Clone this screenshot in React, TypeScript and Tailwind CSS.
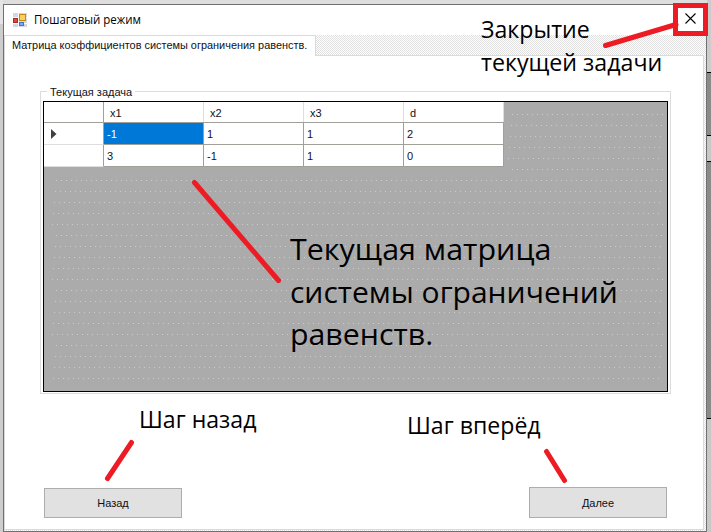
import React from 'react';

const ui = "font-['Liberation_Sans',sans-serif] text-[11px] leading-[13px] text-[#101018] whitespace-nowrap";
const note = "absolute origin-top-left whitespace-nowrap text-black font-['Open_Sans','Noto_Sans',sans-serif]";

const headers = ['x1', 'x2', 'x3', 'd'];
const rows = [
  ['-1', '1', '1', '2'],
  ['3', '-1', '1', '0'],
];

function AppIcon() {
  return (
    <svg width="14" height="14" viewBox="0 0 14 14" className="block shrink-0" shapeRendering="crispEdges">
      <rect width="14" height="14" fill="#d4d7df" />
      <path d="M5.5 0v14M0 4.5h14M0 10.5h14" stroke="#f7f8fa" />
      <rect x="0" y="5" width="5" height="5" fill="#a92b25" />
      <rect x="1" y="6" width="3" height="3" fill="#d8493c" />
      <rect x="6" y="1" width="7" height="7" fill="#c98a12" />
      <rect x="7" y="2" width="5" height="5" fill="#fbd055" />
      <rect x="6" y="9" width="5" height="4" fill="#3f78d0" />
      <rect x="7" y="10" width="3" height="2" fill="#78aaf0" />
    </svg>
  );
}

function Grid() {
  return (
    <div className="relative h-[291px] w-[625px] border border-black bg-[#ababab]">
      <svg className="absolute inset-0" width="623" height="289" shapeRendering="crispEdges">
        <defs>
          <pattern id="dots" width="5" height="55" patternUnits="userSpaceOnUse">
            {[0, 1, 2, 3, 4].map((i) => (
              <rect key={i} x={4 - i} y={1 + i * 11} width="1" height="1" fill="#cccccc" />
            ))}
          </pattern>
        </defs>
        <rect x="464" y="6" width="155" height="62" fill="url(#dots)" />
        <rect x="8" y="68" width="611" height="218" fill="url(#dots)" />
      </svg>
      <div className={`relative w-[460px] bg-white ${ui}`}>
        <div className="flex h-[21px] border-b border-[#a0a098]">
          <div className="w-[60px] border-r border-[#a0a0a0]" />
          {headers.map((h) => (
            <div key={h} className="w-[100px] border-r border-[#dedede] pl-[6px] pt-[5px]">{h}</div>
          ))}
        </div>
        {rows.map((r, i) => (
          <div key={i} className="flex h-[22px]">
            <div className="flex w-[60px] items-center border-r border-b border-r-[#a0a0a0] border-b-[#dedede] pl-[7px]">
              {i === 0 && <svg width="6" height="10"><path d="M0 0L5.5 5L0 10Z" fill="#404040" /></svg>}
            </div>
            {r.map((v, j) => (
              <div
                key={j}
                className={`w-[100px] border-r border-b border-[#a0a098] pl-[3px] pt-[5px] ${i === 0 && j === 0 ? 'bg-[#0078d7] text-white' : ''}`}
              >
                {v}
              </div>
            ))}
          </div>
        ))}
      </div>
    </div>
  );
}

function Annotations() {
  return (
    <>
      <div className={`${note} left-[481px] top-[12px] text-[23px] leading-[34px] scale-x-[1.005]`}>Закрытие</div>
      <div className={`${note} left-[481px] top-[45px] text-[23px] leading-[34px] scale-x-[1.008]`}>текущей задачи</div>
      <div className={`${note} left-[290px] top-[227px] text-[30px] leading-[43px] scale-x-[1.015]`}>Текущая матрица</div>
      <div className={`${note} left-[290px] top-[270px] text-[30px] leading-[43px]`}>системы ограничений</div>
      <div className={`${note} left-[290px] top-[312px] text-[30px] leading-[43px] scale-x-[1.01]`}>равенств.</div>
      <div className={`${note} left-[139px] top-[402px] text-[24px] leading-[34px] scale-x-[0.963]`}>Шаг назад</div>
      <div className={`${note} left-[407px] top-[408px] text-[24px] leading-[34px] scale-x-[0.963]`}>Шаг вперёд</div>
      <svg className="absolute inset-0" width="711" height="532" fill="none" stroke="#ed1c24" strokeWidth="5" strokeLinecap="round">
        <rect x="675.5" y="5.5" width="30" height="28" />
        <path d="M605.5 45.5L676 24.5M194.5 182.5L278.5 280.5M131.5 442.5L107.5 478.5M546.5 451.5L564.5 480.5" />
      </svg>
    </>
  );
}

export default function App() {
  return (
    <div className="relative flex h-[532px] w-[711px] overflow-hidden bg-[#dedede]">
      <div className="w-[3px] shrink-0 bg-[#cdcdcd]">
        <div className="h-[24px] bg-[#e4e4e4]" />
      </div>
      <div className="mt-[4px] flex h-[528px] w-[704px] shrink-0 flex-col border border-[#707070] bg-white">
        <header className="flex h-[30px] items-center justify-between pl-[9px] pr-[10px]">
          <div className="flex items-center gap-[7px]">
            <AppIcon />
            <span className="origin-left scale-x-[0.955] whitespace-nowrap font-['Open_Sans','Noto_Sans',sans-serif] text-[12px] leading-4 text-black">Пошаговый режим</span>
          </div>
          <svg width="11" height="11" className="mt-[-3px]" stroke="black" strokeWidth="1.1"><path d="M.5 .5L10.5 10.5M10.5 .5L.5 10.5" /></svg>
        </header>
        <div className="flex h-[496px] flex-col bg-[conic-gradient(#e0e0e0_25%,#fff_0_50%,#e0e0e0_0_75%,#fff_0)] bg-[length:2px_2px] pr-[2px] pb-[1px]">
          <div className="flex h-[20px] shrink-0">
            <div className="relative z-10 h-[21px] w-[312px] border border-b-0 border-[#dadada] bg-white pl-[7px] pt-[3px]">
              <span className={`block w-max origin-left scale-x-[0.993] ${ui}`}>Матрица коэффициентов системы ограничения равенств.</span>
            </div>
          </div>
          <main className="flex grow flex-col border border-[#dadada] bg-white pl-[35px]">
            <fieldset className="relative mt-[35px] h-[303px] w-[631px] border border-[#dcdcdc] pl-[2px] pt-[9px]">
              <span className={`absolute left-[6px] top-[-6px] bg-white px-[3px] ${ui}`}>Текущая задача</span>
              <Grid />
            </fieldset>
            <div className="mt-[93px] flex w-[627px] items-end justify-between pl-[4px]">
              <button className={`h-[30px] w-[138px] border border-[#adadad] bg-[#e1e1e1] ${ui}`}>Назад</button>
              <button className={`h-[31px] w-[138px] border border-[#adadad] bg-[#e1e1e1] pt-[2px] ${ui}`}>Далее</button>
            </div>
          </main>
        </div>
      </div>
      <div className="flex grow flex-col">
        <div className="h-[72px] bg-[#cccccc]" />
        <div className="h-[64px] border-y border-black bg-[#8b8b8b]" />
        <div className="h-[25px] bg-[#c8c8c8]" />
        <div className="h-[258px] border-y border-black bg-[#8b8b8b]" />
        <div className="grow bg-[#c8c8c8]" />
      </div>
      <Annotations />
    </div>
  );
}
